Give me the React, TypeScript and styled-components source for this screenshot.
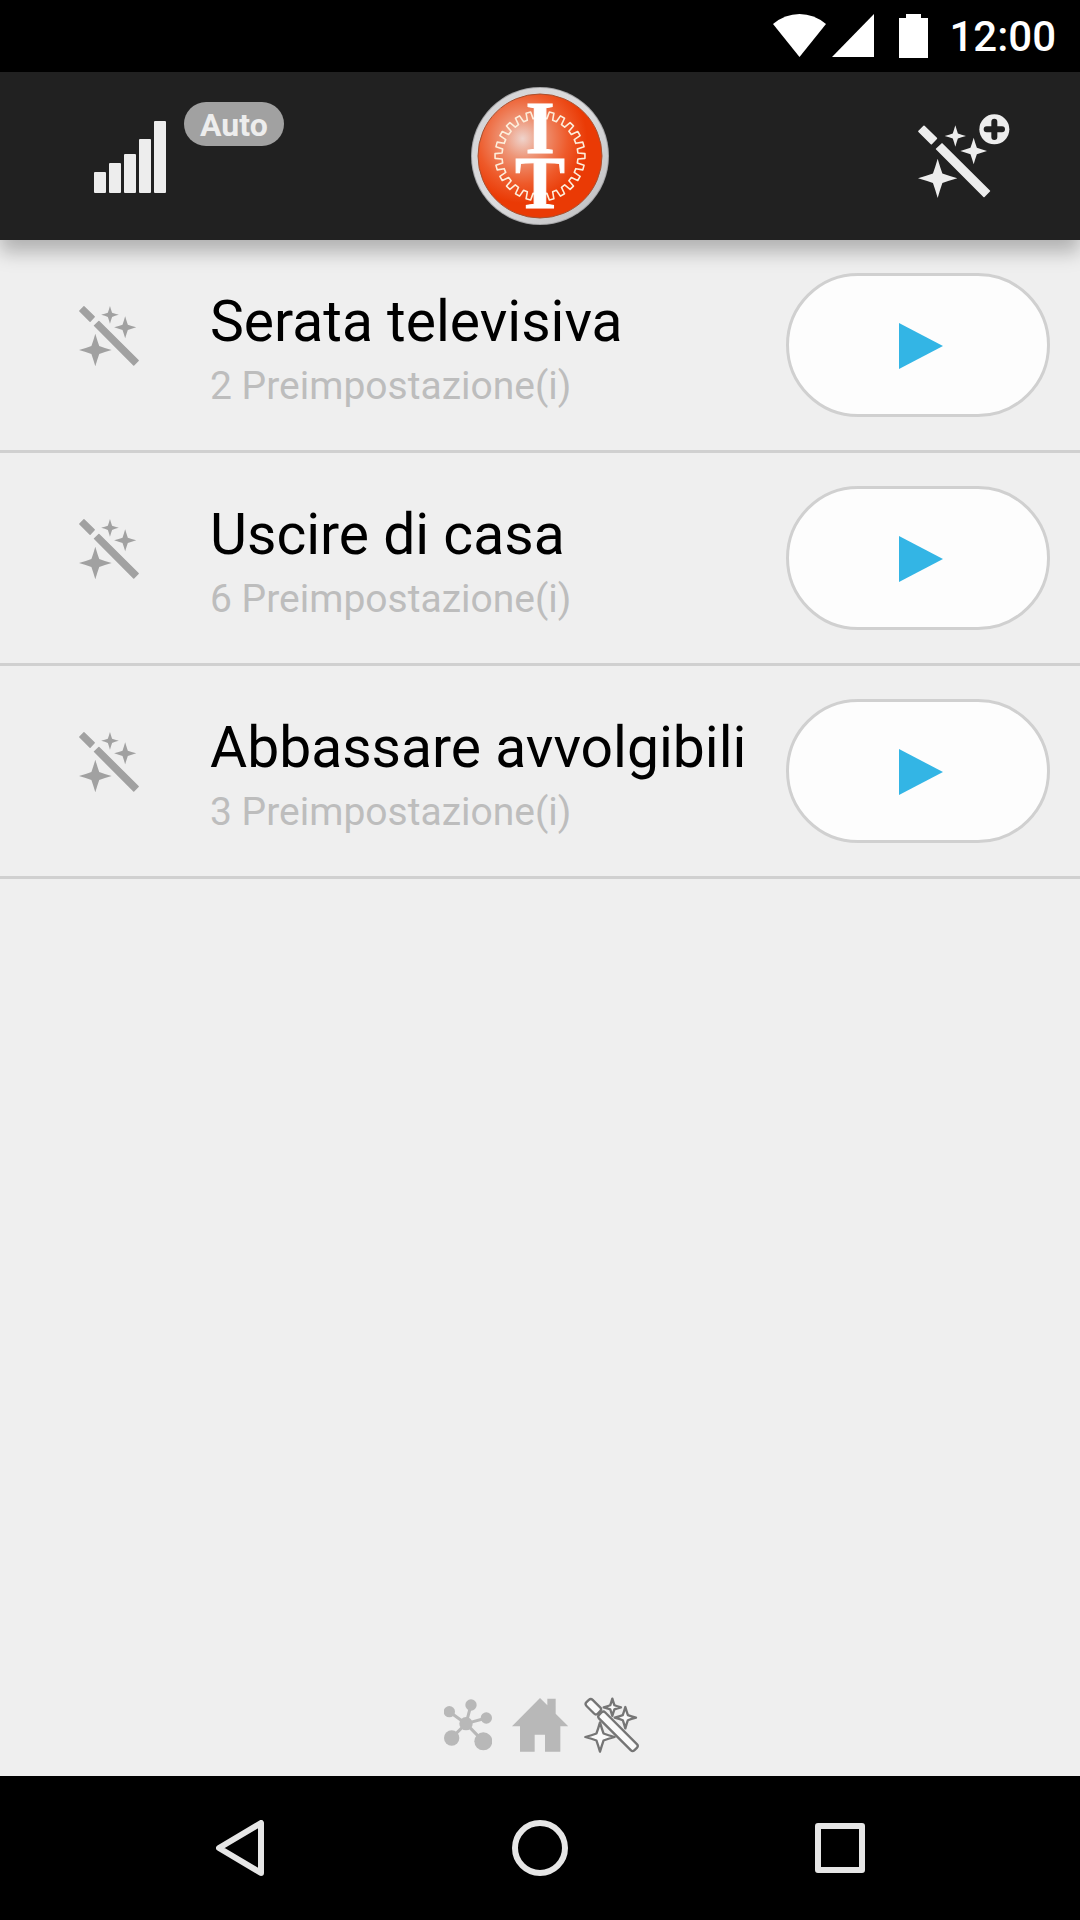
import React from "react";
import styled, { createGlobalStyle } from "styled-components";

const GlobalStyle = createGlobalStyle`
  *, *::before, *::after { box-sizing: border-box; }
  body {
    margin: 0;
    background: #efefef;
    font-family: Roboto, "Liberation Sans", sans-serif;
  }
  button { border: 0; padding: 0; background: none; font: inherit; cursor: pointer; }
  svg { display: block; flex: none; }
  h2, p, ul { margin: 0; padding: 0; }
`;

const Screen = styled.div`
  display: flex;
  flex-direction: column;
  min-height: 100vh;
`;

const StatusBar = styled.div`
  display: flex;
  align-items: center;
  justify-content: flex-end;
  height: 72px;
  padding: 0 24px;
  background: #000;
  color: #fff;
`;

const Clock = styled.time`
  margin-left: 20px;
  padding-top: 2px;
  font-size: 42px;
  font-weight: 500;
  line-height: 48px;
`;

const AppBar = styled.header`
  display: grid;
  grid-template-columns: 1fr auto 1fr;
  align-items: center;
  height: 168px;
  background: #212121;
  color: #ededed;
  box-shadow: 0 12px 18px rgba(0, 0, 0, 0.26);
`;

const ConnectionButton = styled.button`
  display: flex;
  align-self: stretch;
  justify-self: start;
  align-items: flex-start;
  gap: 18px;
  padding: 30px 0 0 94px;
  color: inherit;

  svg { margin-top: 19px; }
`;

const Badge = styled.span`
  padding: 2px 16px 0;
  border-radius: 22px;
  background: #a1a1a1;
  font-size: 32px;
  font-weight: 700;
  line-height: 42px;
`;

const AddButton = styled.button`
  justify-self: end;
  margin-right: 70px;
  color: inherit;
`;

const SceneList = styled.ul`
  flex: 1;
  list-style: none;
`;

const SceneRow = styled.li`
  display: flex;
  align-items: center;
  padding: 33px 30px 33px 79px;
  border-bottom: 3px solid #d0d0d0;
`;

const SceneIcon = styled.span`
  width: 131px;
  padding-bottom: 18px;
  color: #a1a1a1;
`;

const SceneText = styled.div`
  display: flex;
  flex: 1;
  flex-direction: column;
  gap: 8px;
  padding-top: 8px;
  white-space: nowrap;
`;

const SceneTitle = styled.h2`
  color: #000;
  font-size: 57px;
  font-weight: 400;
  line-height: 66px;
`;

const SceneInfo = styled.p`
  color: #bdbdbd;
  font-size: 39px;
  line-height: 46px;
`;

const PlayButton = styled.button`
  display: flex;
  align-items: center;
  justify-content: center;
  width: 264px;
  height: 144px;
  padding: 2px 0 0 6px;
  border: 3px solid #d0d0d0;
  border-radius: 72px;
  background: #fdfdfd;
`;

const Pager = styled.nav`
  display: flex;
  justify-content: center;
  height: 104px;
`;

const PagerButton = styled.button`
  display: flex;
  align-items: center;
  justify-content: center;
  width: 72px;
  padding-top: 1px;
  color: #b8b8b8;
`;

const NavBar = styled.nav`
  display: flex;
  justify-content: center;
  height: 144px;
  background: #000;
`;

const NavButton = styled.button`
  display: flex;
  flex: 0 1 300px;
  align-items: center;
  justify-content: center;
`;

/* Four-pointed star: tips at radius r, waist corners on the diagonals. */
const star = (cx: number, cy: number, r: number) => {
  const c = r * 0.24;
  const h = r * 0.55;
  const k = r * 0.13;
  return (
    `M${cx} ${cy - r}` +
    `Q${cx + k} ${cy - h} ${cx + c} ${cy - c}Q${cx + h} ${cy - k} ${cx + r} ${cy}` +
    `Q${cx + h} ${cy + k} ${cx + c} ${cy + c}Q${cx + k} ${cy + h} ${cx} ${cy + r}` +
    `Q${cx - k} ${cy + h} ${cx - c} ${cy + c}Q${cx - h} ${cy + k} ${cx - r} ${cy}` +
    `Q${cx - h} ${cy - k} ${cx - c} ${cy - c}Q${cx - k} ${cy - h} ${cx} ${cy - r}Z`
  );
};

const WandShape = () => (
  <g fill="currentColor">
    <path d={star(166, 107, 32)} />
    <path d={star(221, 152, 40)} />
    <path d={star(113, 234, 59)} />
    <path
      d="M72 78L109 114L94 130L57 93ZM126 131L268 272L252 288L110 146Z"
      stroke="currentColor"
      strokeWidth="5"
      strokeLinejoin="round"
    />
  </g>
);

const WandIcon = () => (
  <svg width="60" height="60" viewBox="54 75 217 217" aria-hidden="true">
    <WandShape />
  </svg>
);

const AddWandIcon = () => (
  <svg width="92" height="84" viewBox="54 41 276 252" aria-hidden="true">
    <WandShape />
    <circle cx="283" cy="87" r="45" fill="currentColor" />
    <path d="M283 64v46M260 87h46" stroke="#212121" strokeWidth="18" strokeLinecap="round" />
  </svg>
);

const OutlinedWandIcon = () => (
  <svg width="56" height="56" viewBox="493 50 168 168" aria-hidden="true">
    <g fill="#fafafa" stroke="#757575" strokeWidth="7" strokeLinejoin="round">
      <path d={star(578, 81, 26)} />
      <path d={star(617, 112, 32)} />
      <path d={star(541, 170, 44)} />
      <rect x="-24" y="-13" width="48" height="26" rx="8" transform="translate(521 79) rotate(45)" />
      <rect x="-75" y="-13" width="150" height="26" rx="8" transform="translate(595 153) rotate(45)" />
    </g>
  </svg>
);

const HubIcon = () => (
  <svg width="48" height="52" viewBox="72 54 144 156" aria-hidden="true">
    <path
      d="M138 128L153 72M138 128L88 92M138 128L199 111M138 128L95 171M138 128L190 181"
      stroke="currentColor"
      strokeWidth="9"
    />
    <g fill="currentColor">
      <circle cx="138" cy="128" r="20" />
      <circle cx="153" cy="72" r="17" />
      <circle cx="88" cy="92" r="17" />
      <circle cx="199" cy="111" r="17" />
      <circle cx="95" cy="171" r="23" />
      <circle cx="190" cy="181" r="27" />
    </g>
  </svg>
);

const HomeIcon = () => (
  <svg width="56" height="54" viewBox="276 52 168 162" aria-hidden="true">
    <path
      fill="currentColor"
      d="M360 52L382 74V54H407V99L445 137H421V213H375V162H344V213H300V137H276Z"
    />
  </svg>
);

const SignalIcon = () => (
  <svg width="72" height="72" aria-hidden="true" fill="currentColor">
    <rect x="0" y="51" width="12" height="21" rx="1" />
    <rect x="15" y="42" width="12" height="30" rx="1" />
    <rect x="30" y="33" width="12" height="39" rx="1" />
    <rect x="45" y="18" width="12" height="54" rx="1" />
    <rect x="60" y="0" width="12" height="72" rx="1" />
  </svg>
);

const TEETH = 24;

const gearPath = (cx: number, cy: number, inner: number, outer: number) => {
  const step = (Math.PI * 2) / TEETH;
  const at = (r: number, a: number) =>
    `${(cx + r * Math.cos(a)).toFixed(2)} ${(cy + r * Math.sin(a)).toFixed(2)}`;
  let d = "";
  for (let i = 0; i < TEETH; i++) {
    const a = i * step;
    d += `${i ? "L" : "M"}${at(inner, a - step * 0.3)}L${at(outer, a - step * 0.2)}`;
    d += `L${at(outer, a + step * 0.2)}L${at(inner, a + step * 0.3)}`;
  }
  return d + "Z";
};

const LogoSvg = styled.svg`
  overflow: visible;
`;

const Logo = () => (
  <LogoSvg width="138" height="138" viewBox="0 0 138 138" role="img" aria-label="IT">
    <defs>
      <radialGradient id="face" cx="0.36" cy="0.36" r="0.52">
        <stop offset="0" stopColor="#efd3cb" />
        <stop offset="0.3" stopColor="#ee9678" />
        <stop offset="0.7" stopColor="#ee5a2a" />
        <stop offset="1" stopColor="#ea3a05" />
      </radialGradient>
      <linearGradient id="rim" x1="0" y1="0" x2="1" y2="1">
        <stop offset="0" stopColor="#d2d2d4" />
        <stop offset="0.5" stopColor="#dcdcde" />
        <stop offset="1" stopColor="#bcbcbe" />
      </linearGradient>
    </defs>
    <circle cx="69" cy="69" r="69" fill="#a6a6a8" />
    <circle cx="69" cy="69" r="68" fill="url(#rim)" />
    <circle cx="69" cy="69" r="62" fill="url(#face)" stroke="#a8502f" strokeWidth="1" />
    <path
      d={gearPath(69, 69, 38, 45)}
      fill="none"
      stroke="#fdeedb"
      strokeWidth="1.6"
      strokeLinejoin="round"
    />
    <g
      fill="#fff"
      stroke="#fff"
      strokeWidth="1"
      fontFamily='"Liberation Serif", "Times New Roman", serif'
      fontSize="75"
      fontWeight="700"
      textAnchor="middle"
    >
      <text x="69" y="66">I</text>
      <text x="69" y="121">T</text>
    </g>
  </LogoSvg>
);

const StatusIcons = () => (
  <svg width="156" height="45" viewBox="773 14 156 45" fill="#fff" aria-hidden="true">
    <path d="M799.500 57L773 24Q785 14 799.500 14T826 24Z" />
    <path d="M874 14V57H832Z" />
    <path d="M906 14H921V18H928V58H899V18H906Z" />
  </svg>
);

const scenes = [
  { title: "Serata televisiva", presets: 2 },
  { title: "Uscire di casa", presets: 6 },
  { title: "Abbassare avvolgibili", presets: 3 },
];

export default function App() {
  return (
    <Screen>
      <GlobalStyle />
      <StatusBar>
        <StatusIcons />
        <Clock>12:00</Clock>
      </StatusBar>

      <AppBar>
        <ConnectionButton>
          <SignalIcon />
          <Badge>Auto</Badge>
        </ConnectionButton>
        <Logo />
        <AddButton aria-label="Aggiungi scena">
          <AddWandIcon />
        </AddButton>
      </AppBar>

      <SceneList>
        {scenes.map(({ title, presets }) => (
          <SceneRow key={title}>
            <SceneIcon>
              <WandIcon />
            </SceneIcon>
            <SceneText>
              <SceneTitle>{title}</SceneTitle>
              <SceneInfo>{presets} Preimpostazione(i)</SceneInfo>
            </SceneText>
            <PlayButton aria-label={`Avvia ${title}`}>
              <svg width="44" height="46" viewBox="0 0 44 46" aria-hidden="true">
                <path d="M0 0L44 23L0 46Z" fill="#33b5e5" />
              </svg>
            </PlayButton>
          </SceneRow>
        ))}
      </SceneList>

      <Pager>
        <PagerButton aria-label="Dispositivi">
          <HubIcon />
        </PagerButton>
        <PagerButton aria-label="Casa">
          <HomeIcon />
        </PagerButton>
        <PagerButton aria-label="Scene" aria-current="page">
          <OutlinedWandIcon />
        </PagerButton>
      </Pager>

      <NavBar>
        <NavButton aria-label="Indietro">
          <svg width="48" height="56" fill="none" stroke="#e6e6e6" strokeWidth="6" strokeLinejoin="round">
            <path d="M3 28L45 3V53Z" />
          </svg>
        </NavButton>
        <NavButton aria-label="Home">
          <svg width="56" height="56" fill="none" stroke="#e6e6e6" strokeWidth="6">
            <circle cx="28" cy="28" r="25" />
          </svg>
        </NavButton>
        <NavButton aria-label="Recenti">
          <svg width="50" height="50" fill="none" stroke="#e6e6e6" strokeWidth="6" strokeLinejoin="round">
            <rect x="3" y="3" width="44" height="44" />
          </svg>
        </NavButton>
      </NavBar>
    </Screen>
  );
}
